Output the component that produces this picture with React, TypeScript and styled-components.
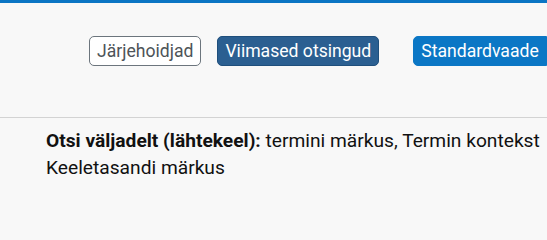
import React from "react";
import styled, {createGlobalStyle} from "styled-components";

const GlobalStyle = createGlobalStyle`
	html, body {
		margin: 0;
		padding: 0;
		background-color: #f8f8f8;
		overflow: hidden;
	}
	body {
		font-family: Roboto, "Liberation Sans", sans-serif;
		color: #111;
	}
`;

type Variant = "outline" | "dark" | "primary" | "toggle";

const colors: Record<Variant, {bg: string; border: string; text: string}> = {
	outline: {bg: "#ffffff", border: "#6c757d", text: "#4d5358"},
	dark: {bg: "#2b5f91", border: "#1f4f7c", text: "#ffffff"},
	primary: {bg: "#0b77c5", border: "#0b77c5", text: "#ffffff"},
	toggle: {bg: "#f8f8f8", border: "#4a4a4a", text: "#333333"},
};

const Page = styled.div`
	width: 100%;
	height: 200px;
	overflow: hidden;
	border-top: 3px solid #0b75c4;
	box-sizing: border-box;
`;

const Toolbar = styled.div`
	display: flex;
	align-items: flex-start;
	width: 720px;
	height: 115px;
	padding: 33px 0 0 89px;
	box-sizing: border-box;
	border-bottom: 1px solid #d3d3d3;
`;

const Button = styled.button<{variant: Variant}>`
	flex-shrink: 0;
	height: 30px;
	padding: 0 7px;
	font-family: Roboto, "Liberation Sans", sans-serif;
	font-size: 17.6px;
	line-height: 28px;
	white-space: nowrap;
	border: 1px solid ${p => colors[p.variant].border};
	border-radius: 5px;
	background-color: ${p => colors[p.variant].bg};
	color: ${p => colors[p.variant].text};
	cursor: pointer;
`;

const Group = styled.div<{gap: number}>`
	display: flex;
	flex-shrink: 0;
	margin-left: ${p => p.gap}px;

	& > button:not(:last-child) {
		border-top-right-radius: 0;
		border-bottom-right-radius: 0;
	}
	& > button:not(:first-child) {
		border-top-left-radius: 0;
		border-bottom-left-radius: 0;
	}
`;

const Toggle = styled(Button)`
	width: 36px;
`;

const Info = styled.p`
	margin: 0;
	padding: 9px 0 0 46px;
	width: 540px;
	font-size: 19.2px;
	line-height: 27px;
	color: #111;
`;

const Label = styled.b`
	font-weight: 700;
`;

export default function App() {
	return (
		<>
			<GlobalStyle />
			<Page>
				<Toolbar>
					<Button variant="outline">Järjehoidjad</Button>
					<Group gap={16}>
						<Button variant="dark">Viimased otsingud</Button>
					</Group>
					<Group gap={34}>
						<Button variant="primary">Standardvaade</Button>
						<Toggle variant="toggle" aria-label="Vaate valik" />
					</Group>
				</Toolbar>
				<Info>
					<Label>Otsi väljadelt (lähtekeel):</Label> termini märkus, Termin kontekst Keeletasandi märkus
				</Info>
			</Page>
		</>
	);
}
